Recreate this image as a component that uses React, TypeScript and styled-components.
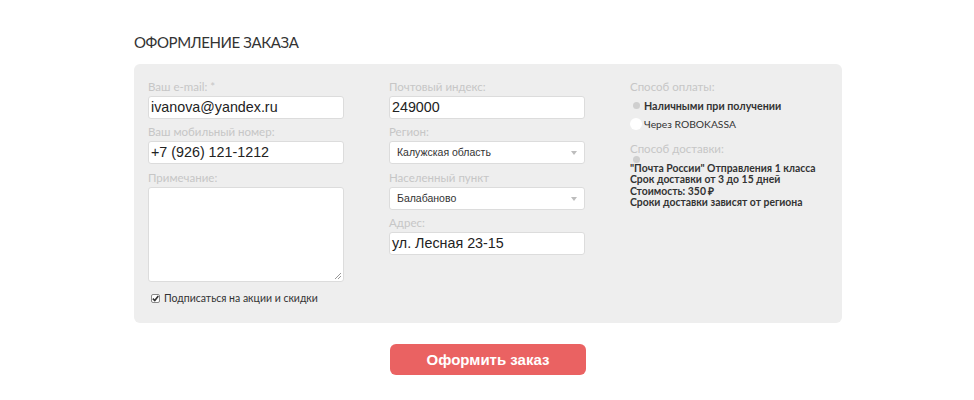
import React from "react";
import styled, { createGlobalStyle } from "styled-components";

const Global = createGlobalStyle`
  html, body { margin: 0; padding: 0; background: #fff; }
  body { font-family: Lato, "Open Sans", sans-serif; }
  * { box-sizing: border-box; }
`;

const Page = styled.div`
  width: 974px;
  padding: 32px 0 0 134px;
`;

const Title = styled.h1`
  margin: 0 0 12px;
  font-family: Lato, "Open Sans", sans-serif;
  font-weight: 400;
  font-size: 15px;
  line-height: 20px;
  color: #333;
  letter-spacing: -0.4px;
`;

const Panel = styled.div`
  width: 708px;
  height: 259px;
  background: #eeeeee;
  border-radius: 6px;
  padding: 16px 14px 0 14px;
  display: grid;
  grid-template-columns: 196px 196px 196px;
  column-gap: 45px;
`;

const Column = styled.div`
  display: flex;
  flex-direction: column;
`;

const Label = styled.div<{ $top?: number; $bottom?: number }>`
  font-size: 11.5px;
  line-height: 14px;
  color: #c6c6c6;
  margin-top: ${(p) => p.$top ?? 0}px;
  margin-bottom: ${(p) => p.$bottom ?? 2}px;
`;

const Input = styled.div`
  height: 23px;
  background: #fff;
  border: 1px solid #dcdcdc;
  border-radius: 3px;
  padding: 0 2px;
  font-family: "Liberation Sans", Arial, sans-serif;
  font-size: 14.3px;
  line-height: 21px;
  color: #222;
`;

const TextArea = styled.div`
  position: relative;
  height: 95px;
  background: #fff;
  border: 1px solid #dcdcdc;
  border-radius: 3px;
`;

const Grip = styled.svg`
  position: absolute;
  right: 1px;
  bottom: 1px;
`;

const Select = styled.div`
  position: relative;
  height: 23px;
  background: #fff;
  border: 1px solid #dcdcdc;
  border-radius: 3px;
  padding: 0 7px;
  font-family: "Liberation Sans", Arial, sans-serif;
  font-size: 10.5px;
  line-height: 21px;
  color: #333;
  display: flex;
  align-items: center;
  justify-content: space-between;
`;

const Caret = styled.span`
  width: 0;
  height: 0;
  border-left: 3.5px solid transparent;
  border-right: 3.5px solid transparent;
  border-top: 4px solid #bdbdbd;
`;

const CheckRow = styled.label`
  display: flex;
  align-items: center;
  gap: 4px;
  margin-top: 9px;
  padding-left: 3px;
  font-size: 10.5px;
  line-height: 14px;
  color: #333;
`;

const Check = styled.span`
  width: 9px;
  height: 9px;
  border: 1px solid #888;
  border-radius: 2px;
  background: #fff;
  display: flex;
  align-items: center;
  justify-content: center;
`;

const RadioRow = styled.div<{ $bold?: boolean }>`
  display: flex;
  align-items: center;
  gap: 2px;
  height: 18.5px;
  font-size: ${(p) => (p.$bold ? 10.7 : 10.3)}px;
  color: #333;
  font-weight: ${(p) => (p.$bold ? 700 : 400)};
`;

const Radio = styled.span<{ $on?: boolean; $compact?: boolean }>`
  width: 12px;
  height: ${(p) => (p.$compact ? 7 : 12)}px;
  border-radius: 50%;
  flex: none;
  display: flex;
  align-items: center;
  justify-content: center;
  background: ${(p) => (p.$on ? "transparent" : "#fff")};
  &::after {
    content: "";
    display: ${(p) => (p.$on ? "block" : "none")};
    width: 7px;
    height: 7px;
    border-radius: 50%;
    background: #cfcfcf;
  }
`;

const DeliveryText = styled.div`
  font-size: 10.4px;
  font-weight: 700;
  line-height: 11.4px;
  color: #333;
  white-space: nowrap;
`;

const ButtonRow = styled.div`
  width: 708px;
  display: flex;
  justify-content: center;
  padding-top: 21px;
`;

const Button = styled.button`
  width: 196px;
  height: 31px;
  background: #ea6262;
  border: none;
  border-radius: 6px;
  color: #fff;
  font-family: "Liberation Sans", Arial, sans-serif;
  font-weight: 700;
  font-size: 15px;
  cursor: pointer;
`;

export default function App() {
  return (
    <>
      <Global />
      <Page>
        <Title>ОФОРМЛЕНИЕ ЗАКАЗА</Title>
        <Panel>
          <Column>
            <Label>Ваш e-mail: *</Label>
            <Input>ivanova@yandex.ru</Input>
            <Label $top={6}>Ваш мобильный номер:</Label>
            <Input>+7 (926) 121-1212</Input>
            <Label $top={7}>Примечание:</Label>
            <TextArea>
              <Grip width="8" height="8" viewBox="0 0 8 8">
                <path d="M7 1 L1 7 M7 4 L4 7" stroke="#999" strokeWidth="1" />
              </Grip>
            </TextArea>
            <CheckRow>
              <Check>
                <svg width="7" height="7" viewBox="0 0 7 7">
                  <path d="M0.8 3.6 L2.8 5.6 L6.3 1" stroke="#333" strokeWidth="1.6" fill="none" />
                </svg>
              </Check>
              Подписаться на акции и скидки
            </CheckRow>
          </Column>
          <Column>
            <Label>Почтовый индекс:</Label>
            <Input>249000</Input>
            <Label $top={6}>Регион:</Label>
            <Select>
              Калужская область
              <Caret />
            </Select>
            <Label $top={7}>Населенный пункт</Label>
            <Select>
              Балабаново
              <Caret />
            </Select>
            <Label $top={6}>Адрес:</Label>
            <Input>ул. Лесная 23-15</Input>
          </Column>
          <Column>
            <Label>Способ оплаты:</Label>
            <RadioRow $bold>
              <Radio $on />
              Наличными при получении
            </RadioRow>
            <RadioRow>
              <Radio />
              Через ROBOKASSA
            </RadioRow>
            <Label $top={9} $bottom={0}>Способ доставки:</Label>
            <Radio $on $compact />
            <DeliveryText>
              "Почта России" Отправления 1 класса
              <br />
              Срок доставки от 3 до 15 дней
              <br />
              Стоимость: 350 ₽
              <br />
              Сроки доставки зависят от региона
            </DeliveryText>
          </Column>
        </Panel>
        <ButtonRow>
          <Button>Оформить заказ</Button>
        </ButtonRow>
      </Page>
    </>
  );
}
